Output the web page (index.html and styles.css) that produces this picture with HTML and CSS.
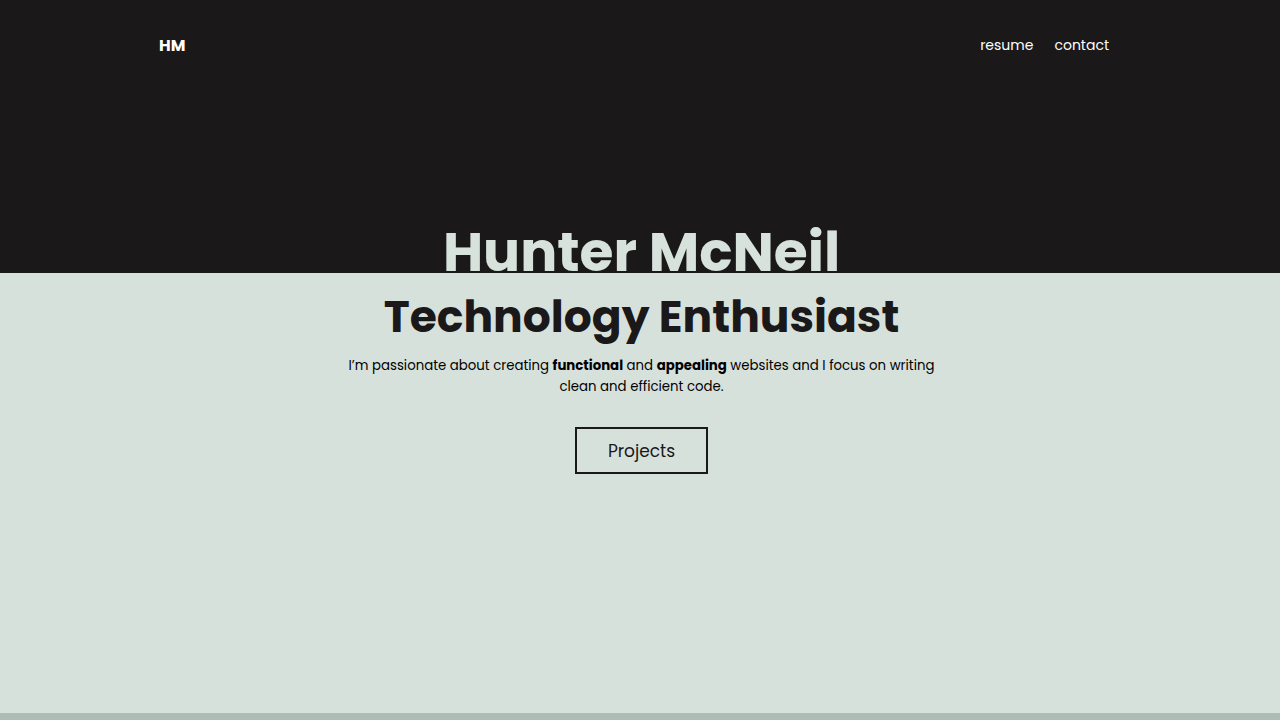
FILE: index.html
```html
<!DOCTYPE html>
<html lang="en">
<head>
<meta charset="utf-8">
<title>Hunter McNeil</title>
<link rel="stylesheet" href="styles.css">
</head>
<body>
<header class="top">
  <nav class="nav">
    <a class="logo" href="#">HM</a>
    <div class="links">
      <a href="#">resume</a>
      <a href="#">contact</a>
    </div>
  </nav>
  <h1 class="name">Hunter McNeil</h1>
</header>
<main class="hero">
  <h2 class="title">Technology Enthusiast</h2>
  <p class="intro">I’m passionate about creating <strong>functional</strong> and <strong>appealing</strong> websites and I focus on writing clean and efficient code.</p>
  <a class="btn" href="#">Projects</a>
</main>
<footer class="strip"></footer>
</body>
</html>
```
FILE: styles.css
```css
* { box-sizing: border-box; }
html, body { margin: 0; padding: 0; }
body {
  font-family: "Poppins", "Inter", "Liberation Sans", sans-serif;
  background: #d7e1dc;
  height: 720px;
  overflow: hidden;
  display: flex;
  flex-direction: column;
}
a { text-decoration: none; color: inherit; }
.top {
  background: #1b1819;
  height: 273px;
  overflow: hidden;
  display: flex;
  flex-direction: column;
}
.nav {
  display: flex;
  justify-content: space-between;
  align-items: center;
  padding: 33px 171px 0 159px;
  color: #ffffff;
}
.logo { font-weight: 700; font-size: 16px; }
.links { display: flex; gap: 21px; font-size: 14px; }
.name {
  margin: auto 0 -6px;
  padding-left: 3px;
  text-align: center;
  font-size: 55px;
  font-weight: 700;
  line-height: 1;
  color: #d7e2dd;
}
.hero {
  flex: 1;
  display: flex;
  flex-direction: column;
  align-items: center;
  padding-left: 3px;
  color: #1b1819;
}
.title {
  margin: 20px 0 0;
  font-size: 44px;
  font-weight: 700;
  line-height: 1.1;
}
.intro {
  margin: 14px 0 0;
  width: 600px;
  text-align: center;
  font-size: 13.3px;
  line-height: 21px;
  color: #000;
}
.intro strong { font-weight: 700; }
.btn {
  margin-top: 30px;
  width: 133px;
  height: 47px;
  border: 2px solid #1b1819;
  display: flex;
  align-items: center;
  justify-content: center;
  font-size: 17px;
  color: #1b1819;
}
.strip {
  height: 7px;
  background: #adbcb4;
}
```
